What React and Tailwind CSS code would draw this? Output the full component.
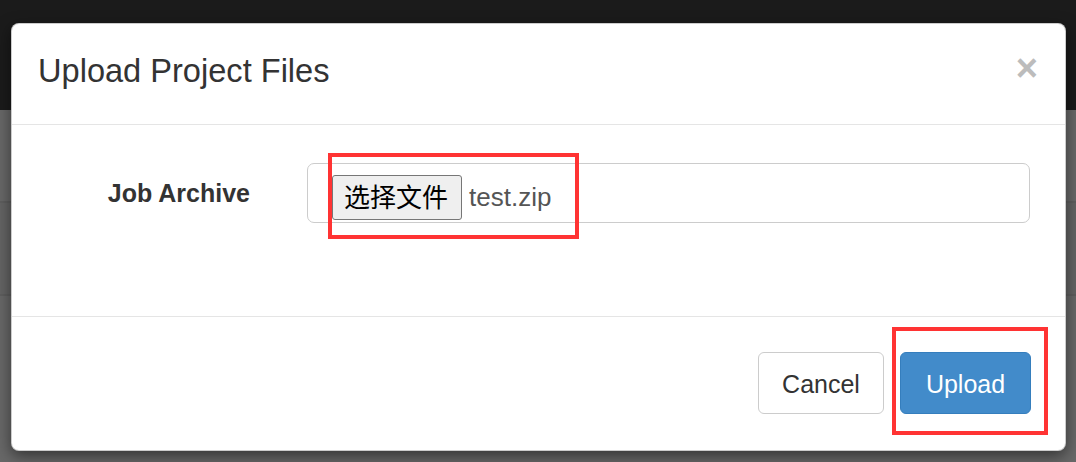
import React from 'react';

const font = { fontFamily: '"Liberation Sans", Arial, sans-serif' };

export default function App() {
  return <div className="relative w-[1076px] h-[462px] overflow-hidden bg-[#686868]" style={font}>
      {/* page behind the backdrop */}
      <div className="h-[110px] bg-[#1b1b1b]" />
      <div className="h-[93px] border-b-2 border-[#5e5e5e]" />
      <div className="h-[93px] border-b-2 border-[#5e5e5e] bg-[#646464]" />

      {/* modal */}
      <div className="absolute left-[11px] top-[23px] w-[1055px] h-[428px] flex flex-col bg-white border border-black/20 rounded-[8px] shadow-[0_5px_15px_rgba(0,0,0,0.5)]">
        <div className="h-[101px] shrink-0 flex justify-between items-start pl-[26px] pr-[27px] border-b border-[#e5e5e5]">
          <h4 className="pt-[31px] text-[32.6px] leading-none text-[#333]">Upload Project Files</h4>
          <button className="mt-[25px] text-[38px] leading-none font-bold text-[#bcbcbc]">×</button>
        </div>

        <div className="h-[191px] shrink-0 pt-[38px] pr-[35px] flex items-start">
          <div className="w-[295px] h-[60px] shrink-0 flex items-center justify-end pr-[57px]">
            <label className="text-[25px] leading-none font-bold text-[#333]">Job Archive</label>
          </div>
          <div className="flex-1 h-[60px] border border-[#cccccc] rounded-[7px] flex items-start pt-[11px] pl-[24px]">
            <span className="h-[45px] pl-[11px] pr-[13px] flex items-center bg-[#efefef] border border-[#767676] rounded-[3px] text-[26px] leading-none text-black" style={{ fontFamily: '"Liberation Sans", "Noto Sans CJK SC", sans-serif' }}>选择文件</span>
            <span className="ml-[7px] mt-[9px] text-[26px] leading-none text-[#555]">test.zip</span>
          </div>
        </div>

        <div className="flex-1 border-t border-[#e5e5e5] flex justify-end items-start pt-[35px] pr-[34px] gap-[16px]">
          <button className="w-[126px] h-[62px] pt-[3px] bg-white border border-[#cccccc] rounded-[6px] text-[25px] text-[#333]">Cancel</button>
          <button className="w-[131px] h-[62px] pt-[3px] bg-[#428bca] border border-[#357ebd] rounded-[6px] text-[25px] text-white">Upload</button>
        </div>
      </div>

      {/* red annotation boxes */}
      <div className="absolute left-[328px] top-[153px] w-[251px] h-[86px] border-[4px] border-[#ff3333]" />
      <div className="absolute left-[892px] top-[327px] w-[156px] h-[108px] border-[4px] border-[#ff3333]" />
    </div>;
}
